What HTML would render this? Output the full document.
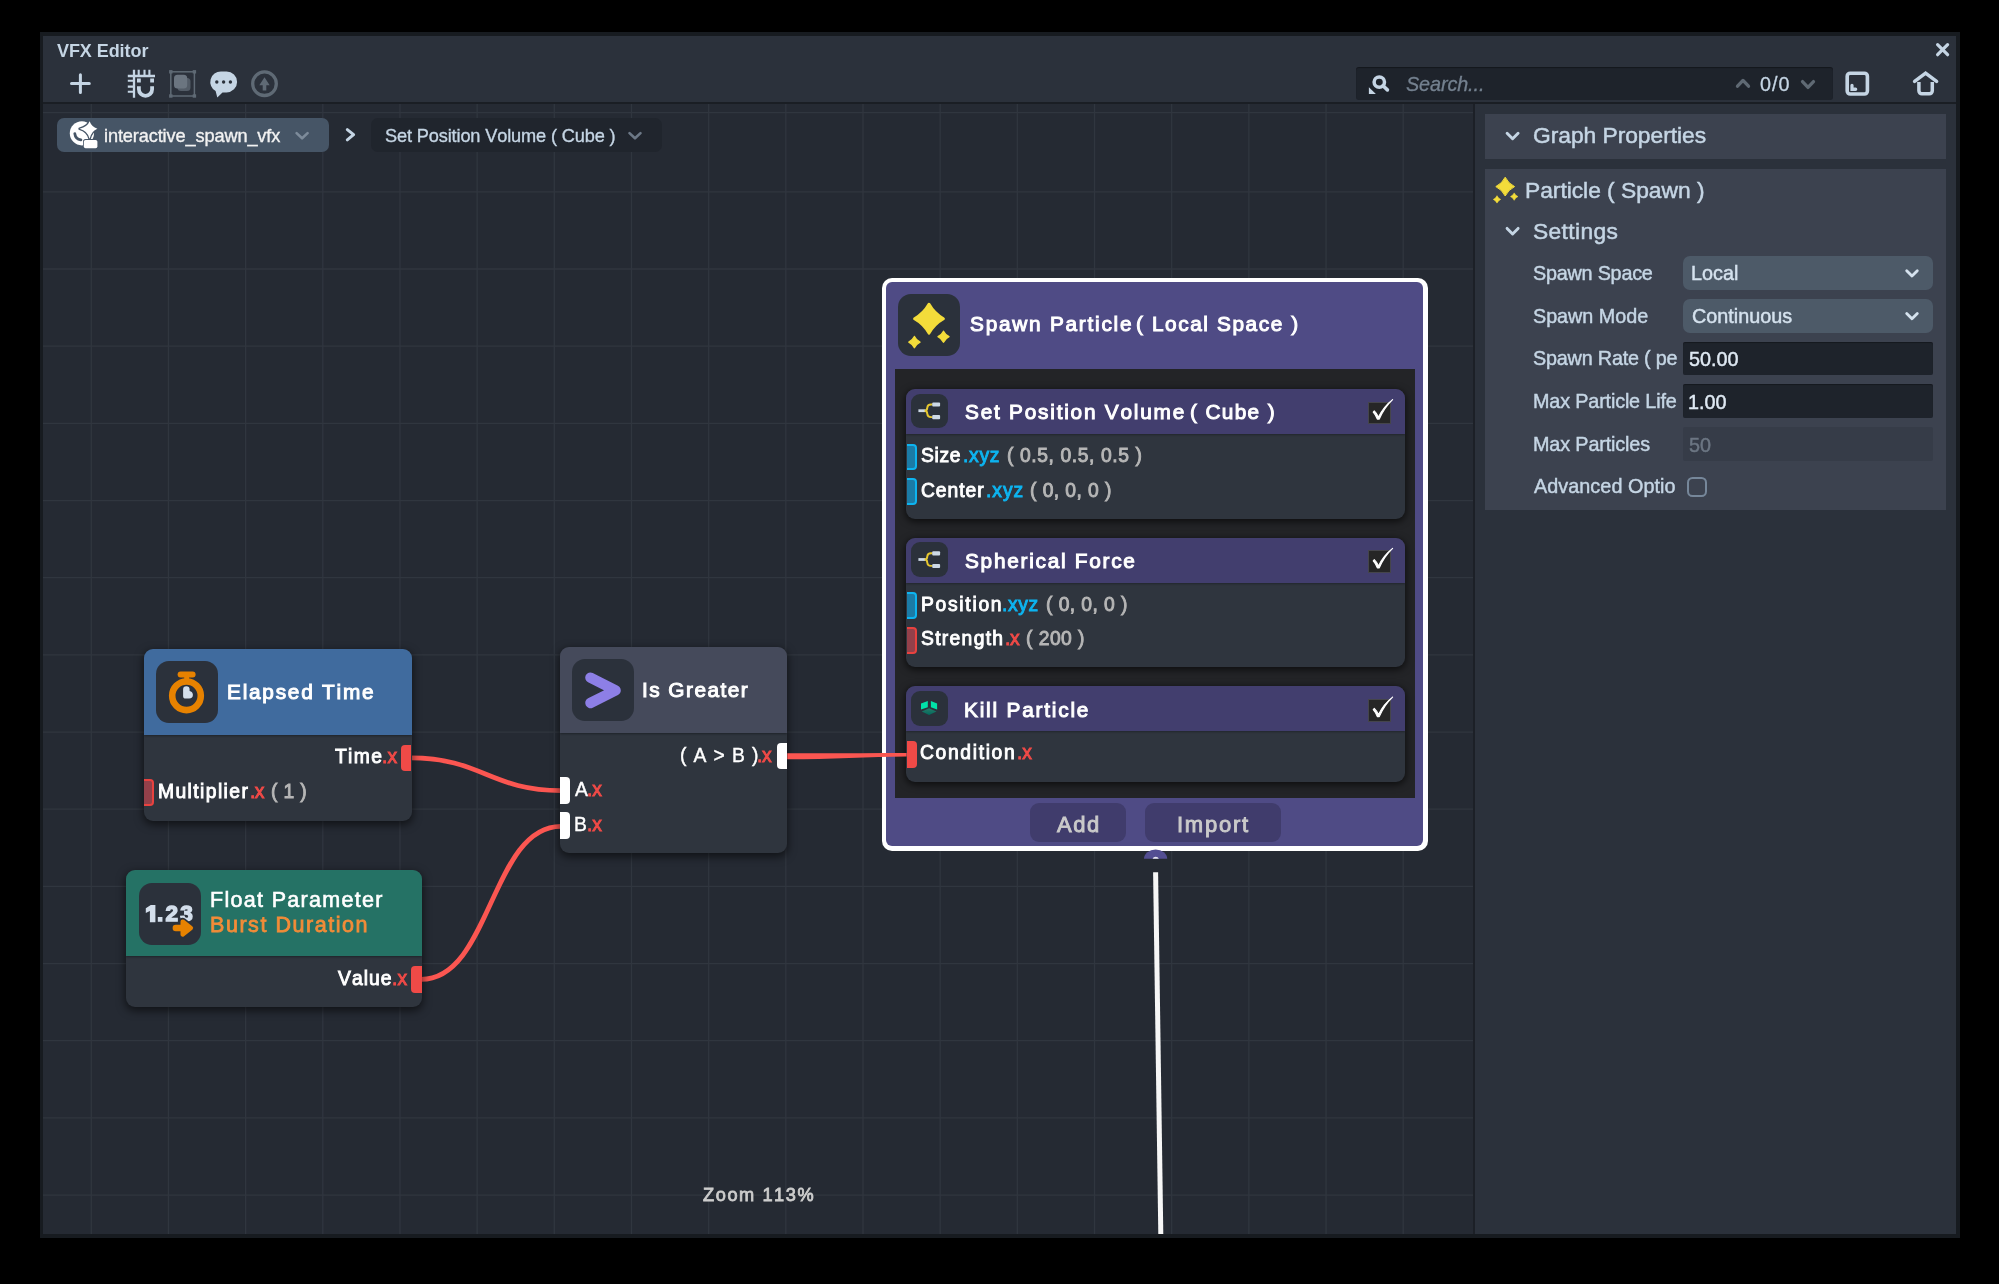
<!DOCTYPE html>
<html><head><meta charset="utf-8"><title>VFX Editor</title>
<style>
html,body{margin:0;padding:0;background:#000;}
body{width:1999px;height:1284px;position:relative;overflow:hidden;font-family:"Liberation Sans",sans-serif;font-kerning:none;}
.a{position:absolute;display:block;}
.t{white-space:pre;will-change:transform;}
.sh{box-shadow:0 3px 9px 1px rgba(0,0,0,.55);}
</style></head><body>
<div class="a " style="left:39.50px;top:32.00px;width:1920.50px;height:1205.50px;background:#171b20;"></div>
<div class="a " style="left:43.00px;top:36.00px;width:1913.00px;height:66.00px;background:#2b313b;"></div>
<div class="a " style="left:43.00px;top:102.00px;width:1913.00px;height:2.00px;background:#1a1e24;"></div>
<div class="a " style="left:43.00px;top:104.00px;width:1430.00px;height:1130.00px;background:#252a33;"></div>
<div class="a " style="left:1473.00px;top:104.00px;width:2.00px;height:1130.00px;background:#1c2027;"></div>
<div class="a " style="left:1475.00px;top:104.00px;width:481.00px;height:1130.00px;background:#2b313b;"></div>
<svg class="a" style="left:0;top:0;" width="1999" height="1284" viewBox="0 0 1999 1284"><g stroke="#30363f" stroke-width="1.3"><line x1="91.30" y1="104" x2="91.30" y2="1234"/><line x1="168.47" y1="104" x2="168.47" y2="1234"/><line x1="245.64" y1="104" x2="245.64" y2="1234"/><line x1="322.81" y1="104" x2="322.81" y2="1234"/><line x1="399.98" y1="104" x2="399.98" y2="1234"/><line x1="477.15" y1="104" x2="477.15" y2="1234"/><line x1="554.32" y1="104" x2="554.32" y2="1234"/><line x1="631.49" y1="104" x2="631.49" y2="1234"/><line x1="708.66" y1="104" x2="708.66" y2="1234"/><line x1="785.83" y1="104" x2="785.83" y2="1234"/><line x1="863.00" y1="104" x2="863.00" y2="1234"/><line x1="940.17" y1="104" x2="940.17" y2="1234"/><line x1="1017.34" y1="104" x2="1017.34" y2="1234"/><line x1="1094.51" y1="104" x2="1094.51" y2="1234"/><line x1="1171.68" y1="104" x2="1171.68" y2="1234"/><line x1="1248.85" y1="104" x2="1248.85" y2="1234"/><line x1="1326.02" y1="104" x2="1326.02" y2="1234"/><line x1="1403.19" y1="104" x2="1403.19" y2="1234"/><line x1="43" y1="112.70" x2="1473" y2="112.70"/><line x1="43" y1="191.85" x2="1473" y2="191.85"/><line x1="43" y1="269.02" x2="1473" y2="269.02"/><line x1="43" y1="346.19" x2="1473" y2="346.19"/><line x1="43" y1="423.36" x2="1473" y2="423.36"/><line x1="43" y1="500.53" x2="1473" y2="500.53"/><line x1="43" y1="577.70" x2="1473" y2="577.70"/><line x1="43" y1="654.87" x2="1473" y2="654.87"/><line x1="43" y1="732.04" x2="1473" y2="732.04"/><line x1="43" y1="809.21" x2="1473" y2="809.21"/><line x1="43" y1="886.38" x2="1473" y2="886.38"/><line x1="43" y1="963.55" x2="1473" y2="963.55"/><line x1="43" y1="1040.72" x2="1473" y2="1040.72"/><line x1="43" y1="1117.89" x2="1473" y2="1117.89"/><line x1="43" y1="1195.06" x2="1473" y2="1195.06"/></g></svg>
<div class="a t" style="left:56.68px;top:41.70px;font-size:18px;line-height:18px;letter-spacing:-0.069px;font-weight:bold;"><span style="color:#c5d5e4;">VFX Editor</span></div>
<svg class="a" style="left:0;top:0;" width="1999" height="1284" viewBox="0 0 1999 1284"><path d="M71.5 83.6H89.3M80.4 74.8V92.4" stroke="#c5d5e4" stroke-width="3" stroke-linecap="round" fill="none"/><g stroke="#c5d5e4" fill="none"><path d="M134 69.8V97.7M127.8 76H155" stroke-width="2.3"/><path d="M138.7 69.8V75M144.5 69.8V75M149.4 69.8V75M127.8 80.7H133M127.8 86.6H133M127.8 91.8H133" stroke-width="2.1"/><path d="M138.9 86.2V89.2A6.6 6.6 0 0 0 152.1 89.2V86.2" stroke-width="3.8"/><path d="M138.9 78.6V82.6M152.1 78.6V82.6" stroke-width="3.8"/></g><g fill="#5f6a75"><rect x="169.1" y="70.1" width="3.4" height="3.4"/><rect x="192.7" y="70.1" width="3.4" height="3.4"/><rect x="169.1" y="94.3" width="3.4" height="3.4"/><rect x="192.7" y="94.3" width="3.4" height="3.4"/></g><rect x="170.8" y="71.8" width="23.6" height="24.2" fill="none" stroke="#5f6a75" stroke-width="1.5"/><rect x="177.5" y="78" width="13" height="13" rx="3.5" fill="#535c67"/><rect x="174" y="74.8" width="13.2" height="13.6" rx="3.5" fill="#6b7580"/><path d="M221 71.4H226.5A10.6 10.5 0 0 1 226.5 92.4H222.5L217.3 97.6L215.6 91A10.6 10.5 0 0 1 221 71.4Z" fill="#c5d5e4"/><g fill="#2b313b"><circle cx="216.8" cy="82" r="1.7"/><circle cx="223.6" cy="82" r="1.7"/><circle cx="230.4" cy="82" r="1.7"/></g><circle cx="264.5" cy="83.7" r="11.8" fill="none" stroke="#5f6a75" stroke-width="3.3"/><path d="M259.3 85.2L264.5 77.2L269.7 85.2H266.3V90.6H262.7V85.2Z" fill="#5f6a75"/></svg>
<div class="a " style="left:1356.00px;top:67.00px;width:477.00px;height:33.00px;background:#1e232b;border-radius:3px;box-shadow:inset 0 1px 1px rgba(0,0,0,.35);"></div>
<svg class="a" style="left:0;top:0;" width="1999" height="1284" viewBox="0 0 1999 1284"><circle cx="1379.3" cy="82.1" r="5.2" fill="none" stroke="#c5d5e4" stroke-width="3.5"/><path d="M1383 85.8L1387.4 89.9" stroke="#c5d5e4" stroke-width="3.6" stroke-linecap="round"/><path d="M1368.9 87.2V94.1H1375.9Z" fill="#c5d5e4"/><path d="M1737.5 86.2L1743 80.4L1748.5 86.2" fill="none" stroke="#5f6973" stroke-width="3.3" stroke-linecap="round" stroke-linejoin="round"/><path d="M1802.5 81.6L1808 87.4L1813.5 81.6" fill="none" stroke="#5f6973" stroke-width="3.3" stroke-linecap="round" stroke-linejoin="round"/><rect x="1847.2" y="73.2" width="20.2" height="20.8" rx="3" fill="none" stroke="#c5d5e4" stroke-width="3.6"/><path d="M1850.4 91V85.3A1.6 1.6 0 0 1 1853.6 85.3V87.6H1855.6A1.7 1.7 0 0 1 1855.6 91Z" fill="#c5d5e4"/><path d="M1914.6 81.4L1925.6 73.2L1936.6 81.4" fill="none" stroke="#c5d5e4" stroke-width="3.5" stroke-linecap="round" stroke-linejoin="miter"/><path d="M1918.9 82V90.8A3 3 0 0 0 1921.9 93.8H1929.3A3 3 0 0 0 1932.3 90.8V82" fill="none" stroke="#c5d5e4" stroke-width="3.5"/><path d="M1937.6 44.7L1947.6 54.7M1947.6 44.7L1937.6 54.7" stroke="#c5d5e4" stroke-width="3.2" stroke-linecap="round"/></svg>
<div class="a t" style="left:1406.39px;top:74.95px;font-size:19.8px;line-height:19.8px;letter-spacing:-0.094px;font-style:italic;"><span style="color:#74818f;-webkit-text-stroke:0.3px #74818f;">Search...</span></div>
<div class="a t" style="left:1759.98px;top:74.75px;font-size:19.8px;line-height:19.8px;letter-spacing:1.062px;"><span style="color:#c5d5e4;-webkit-text-stroke:0.3px #c5d5e4;">0/0</span></div>
<div class="a " style="left:56.60px;top:118.00px;width:272.70px;height:33.80px;background:#465566;border-radius:7px;"></div>
<div class="a " style="left:370.50px;top:118.00px;width:291.00px;height:33.80px;background:#20252d;border-radius:7px;"></div>
<svg class="a" style="left:0;top:0;" width="1999" height="1284" viewBox="0 0 1999 1284"><circle cx="81.9" cy="133.3" r="12.1" fill="#fff"/><path d="M74.8 133.6A7.2 7.2 0 0 0 80.9 139.9" fill="none" stroke="#465566" stroke-width="2.8" stroke-linecap="round"/><path d="M89.6 121.3Q91.6 126.8 97.4 128.8Q91.6 130.8 89.6 138.8Q87.6 130.8 79.6 128.8Q87.6 126.8 89.6 121.3Z" fill="#fff" stroke="#465566" stroke-width="2.6" paint-order="stroke" stroke-linejoin="round"/><rect x="83.8" y="139.9" width="13.6" height="8.4" rx="1.8" fill="#fff" stroke="#465566" stroke-width="1.6" paint-order="stroke"/><path d="M296.6 133.1L302.1 138.3L307.6 133.1" fill="none" stroke="#7d8b9a" stroke-width="2.6" stroke-linecap="round" stroke-linejoin="round"/><path d="M347.3 129.6L353.6 134.7L347.3 139.8" fill="none" stroke="#c5d5e4" stroke-width="3" stroke-linecap="round" stroke-linejoin="round"/><path d="M629.5 133.1L635 138.3L640.5 133.1" fill="none" stroke="#6c7886" stroke-width="2.6" stroke-linecap="round" stroke-linejoin="round"/></svg>
<div class="a t" style="left:104.16px;top:127.03px;font-size:18.2px;line-height:18.2px;letter-spacing:-0.129px;"><span style="color:#f2f2f2;-webkit-text-stroke:0.35px #f2f2f2;">interactive_spawn_vfx</span></div>
<div class="a t" style="left:384.65px;top:127.03px;font-size:18.2px;line-height:18.2px;letter-spacing:-0.143px;"><span style="color:#c5d5e4;-webkit-text-stroke:0.35px #c5d5e4;">Set Position Volume ( Cube )</span></div>
<svg class="a" style="left:0;top:0;" width="1999" height="1284" viewBox="0 0 1999 1284"><path d="M411 757.9C481 757.9 491 790.6 561 790.6" fill="none" stroke="#fb5651" stroke-width="4.8"/><path d="M421 979.4C491 979.4 491 826.3 561 826.3" fill="none" stroke="#fb5651" stroke-width="4.8"/><path d="M1155.6 872.2L1160.8 1234" fill="none" stroke="#f6f6f6" stroke-width="5"/></svg>
<div class="a sh" style="left:143.7px;top:648.7px;width:267.90000000000003px;height:172.0px;border-radius:9px;background:#2f353e;overflow:hidden;"><div class="a" style="left:0;top:0;width:100%;height:86.0px;background:#406b9e;box-shadow:0 1px 2px rgba(0,0,0,.35);"></div></div>
<div class="a " style="left:155.70px;top:661.30px;width:62.00px;height:62.00px;background:#2b313b;border-radius:13px;"></div>
<svg class="a" style="left:0;top:0;" width="1999" height="1284" viewBox="0 0 1999 1284"><circle cx="186.5" cy="695.8" r="14.3" fill="none" stroke="#e78200" stroke-width="6.6"/><path d="M180.6 674.4H192.6" stroke="#e78200" stroke-width="6" stroke-linecap="round"/><rect x="184.2" y="675" width="4.9" height="7" fill="#e78200"/><path d="M183.1 689.4a3.25 3.25 0 0 1 6.5 0v1.5c2 .4 3.3 1.9 3.3 3.9a3.8 3.8 0 0 1-3.8 3.8h-3.4a2.6 2.6 0 0 1-2.6-2.6z" fill="#d3deeb"/></svg>
<div class="a t" style="left:226.89px;top:681.50px;font-size:20.8px;line-height:20.8px;letter-spacing:1.762px;"><span style="color:#fff;-webkit-text-stroke:1.0px #fff;">Elapsed Time</span></div>
<div class="a t" style="left:334.72px;top:747.20px;font-size:19.3px;line-height:19.3px;letter-spacing:1.335px;"><span style="color:#fff;-webkit-text-stroke:0.9px #fff;">Time</span></div>
<div class="a t" style="left:381.69px;top:747.20px;font-size:19.3px;line-height:19.3px;letter-spacing:0.054px;"><span style="color:#f04a47;-webkit-text-stroke:0.9px #f04a47;">.x</span></div>
<div class="a " style="left:401.00px;top:744.90px;width:10.30px;height:26.60px;background:#f04a47;border-radius:4px 0 0 4px;"></div>
<div class="a " style="left:143.70px;top:779.30px;width:10.00px;height:26.80px;background:#93404a;border-radius:0 4px 4px 0;box-sizing:border-box;border:2px solid #e8423f;border-left:none;"></div>
<div class="a t" style="left:157.77px;top:781.80px;font-size:19.3px;line-height:19.3px;letter-spacing:1.412px;"><span style="color:#fff;-webkit-text-stroke:0.9px #fff;">Multiplier</span></div>
<div class="a t" style="left:249.99px;top:781.80px;font-size:19.3px;line-height:19.3px;letter-spacing:-0.646px;"><span style="color:#f04a47;-webkit-text-stroke:0.9px #f04a47;">.x</span></div>
<div class="a t" style="left:270.95px;top:781.80px;font-size:19.3px;line-height:19.3px;letter-spacing:0.370px;"><span style="color:#b6b6b6;-webkit-text-stroke:0.9px #b6b6b6;">( 1 )</span></div>
<div class="a sh" style="left:126px;top:870.4px;width:296px;height:136.5px;border-radius:9px;background:#2f353e;overflow:hidden;"><div class="a" style="left:0;top:0;width:100%;height:85.60000000000002px;background:#257265;box-shadow:0 1px 2px rgba(0,0,0,.35);"></div></div>
<div class="a " style="left:138.90px;top:883.10px;width:62.00px;height:62.00px;background:#2b313b;border-radius:13px;"></div>
<div class="a t" style="left:157.37px;top:903.30px;font-size:22.6px;line-height:22.6px;letter-spacing:2.218px;font-weight:bold;"><span style="color:#d3deeb;-webkit-text-stroke:1.4px #d3deeb;">.23</span></div>
<svg class="a" style="left:0;top:0;" width="1999" height="1284" viewBox="0 0 1999 1284"><path d="M150.8 904.9H155.4V922.3H149.9V910.9L145.8 913V908.2Z" fill="#d3deeb"/></svg>
<svg class="a" style="left:0;top:0;" width="1999" height="1284" viewBox="0 0 1999 1284"><path d="M175.8 928H184" stroke="#2b313b" stroke-width="9.6" stroke-linecap="round"/><path d="M182.7 921.6L190.9 928L182.7 934.4Z" fill="#2b313b" stroke="#2b313b" stroke-width="7.6" stroke-linejoin="round"/><path d="M175.8 928H184" stroke="#e78200" stroke-width="6.4" stroke-linecap="round"/><path d="M182.7 921.6L190.9 928L182.7 934.4Z" fill="#e78200" stroke="#e78200" stroke-width="4.4" stroke-linejoin="round"/></svg>
<div class="a t" style="left:209.54px;top:889.95px;font-size:21.5px;line-height:21.5px;letter-spacing:1.313px;"><span style="color:#fff;-webkit-text-stroke:0.6px #fff;">Float Parameter</span></div>
<div class="a t" style="left:209.64px;top:914.65px;font-size:21.5px;line-height:21.5px;letter-spacing:1.550px;"><span style="color:#f28c38;-webkit-text-stroke:0.8px #f28c38;">Burst Duration</span></div>
<div class="a t" style="left:338.07px;top:968.80px;font-size:19.3px;line-height:19.3px;letter-spacing:1.023px;"><span style="color:#fff;-webkit-text-stroke:0.9px #fff;">Value</span></div>
<div class="a t" style="left:391.59px;top:968.80px;font-size:19.3px;line-height:19.3px;letter-spacing:0.154px;"><span style="color:#f04a47;-webkit-text-stroke:0.9px #f04a47;">.x</span></div>
<div class="a " style="left:411.30px;top:966.10px;width:10.30px;height:26.60px;background:#f04a47;border-radius:4px 0 0 4px;"></div>
<div class="a sh" style="left:559.9px;top:646.7px;width:227.0px;height:206.69999999999993px;border-radius:9px;background:#2f353e;overflow:hidden;"><div class="a" style="left:0;top:0;width:100%;height:86.09999999999991px;background:#454a5b;box-shadow:0 1px 2px rgba(0,0,0,.35);"></div></div>
<div class="a " style="left:571.90px;top:659.10px;width:62.00px;height:62.00px;background:#2b313b;border-radius:13px;"></div>
<svg class="a" style="left:0;top:0;" width="1999" height="1284" viewBox="0 0 1999 1284"><path d="M590.4 677.6L615.6 690.3L590.4 703" fill="none" stroke="#8d7fe6" stroke-width="10.4" stroke-linecap="round" stroke-linejoin="round"/></svg>
<div class="a t" style="left:642.18px;top:679.60px;font-size:20.8px;line-height:20.8px;letter-spacing:1.465px;"><span style="color:#fff;-webkit-text-stroke:1.0px #fff;">Is Greater</span></div>
<div class="a t" style="left:679.60px;top:745.85px;font-size:19.3px;line-height:19.3px;letter-spacing:0.883px;"><span style="color:#fff;-webkit-text-stroke:0.4px #fff;">( A &gt; B )</span></div>
<div class="a t" style="left:757.49px;top:745.60px;font-size:19.3px;line-height:19.3px;letter-spacing:-0.446px;"><span style="color:#f04a47;-webkit-text-stroke:0.9px #f04a47;">.x</span></div>
<div class="a " style="left:776.60px;top:742.70px;width:10.30px;height:26.60px;background:#fff;border-radius:4px 0 0 4px;"></div>
<div class="a " style="left:559.90px;top:777.30px;width:10.00px;height:26.80px;background:#fff;border-radius:0 4px 4px 0;"></div>
<div class="a " style="left:559.90px;top:812.20px;width:10.00px;height:26.80px;background:#fff;border-radius:0 4px 4px 0;"></div>
<div class="a t" style="left:574.56px;top:780.45px;font-size:19.3px;line-height:19.3px;letter-spacing:-0.198px;"><span style="color:#fff;-webkit-text-stroke:0.4px #fff;">A</span></div>
<div class="a t" style="left:587.49px;top:780.20px;font-size:19.3px;line-height:19.3px;letter-spacing:-0.146px;"><span style="color:#f04a47;-webkit-text-stroke:0.9px #f04a47;">.x</span></div>
<div class="a t" style="left:574.22px;top:815.15px;font-size:19.3px;line-height:19.3px;letter-spacing:0.728px;"><span style="color:#fff;-webkit-text-stroke:0.4px #fff;">B</span></div>
<div class="a t" style="left:587.49px;top:814.90px;font-size:19.3px;line-height:19.3px;letter-spacing:-0.146px;"><span style="color:#f04a47;-webkit-text-stroke:0.9px #f04a47;">.x</span></div>
<div class="a" style="left:881.7px;top:277.5px;width:545.9px;height:573.4px;border-radius:10px;background:#fff;"></div>
<div class="a " style="left:886.40px;top:282.20px;width:536.60px;height:564.00px;background:#4f4b85;border-radius:6px;"></div>
<div class="a " style="left:894.60px;top:369.00px;width:520.50px;height:428.60px;background:#232427;"></div>
<div class="a " style="left:898.00px;top:293.60px;width:62.00px;height:62.00px;background:#2b313b;border-radius:13px;"></div>
<svg class="a" style="left:0;top:0;" width="1999" height="1284" viewBox="0 0 1999 1284"><path d="M929 304.3Q934.184 313.51599999999996 943.4 318.7Q934.184 323.884 929 333.09999999999997Q923.816 323.884 914.6 318.7Q923.816 313.51599999999996 929 304.3Z" fill="#f3dc3a" stroke="#f3dc3a" stroke-width="3" stroke-linejoin="round"/><path d="M943.5 331.2Q945.315 334.885 949.0 336.7Q945.315 338.515 943.5 342.2Q941.685 338.515 938.0 336.7Q941.685 334.885 943.5 331.2Z" fill="#f3dc3a" stroke="#f3dc3a" stroke-width="1.4" stroke-linejoin="round"/><path d="M914.4 336.5Q916.2479999999999 340.252 920.0 342.1Q916.2479999999999 343.94800000000004 914.4 347.70000000000005Q912.552 343.94800000000004 908.8 342.1Q912.552 340.252 914.4 336.5Z" fill="#f3dc3a" stroke="#f3dc3a" stroke-width="1.4" stroke-linejoin="round"/></svg>
<div class="a t" style="left:969.76px;top:313.80px;font-size:20.8px;line-height:20.8px;letter-spacing:1.758px;"><span style="color:#fff;-webkit-text-stroke:1.0px #fff;">Spawn Particle</span></div>
<div class="a t" style="left:1135.81px;top:313.80px;font-size:20.8px;line-height:20.8px;letter-spacing:1.593px;"><span style="color:#fff;-webkit-text-stroke:1.0px #fff;">( Local Space )</span></div>
<div class="a" style="left:906.4px;top:388.8px;width:498.80000000000007px;height:130.09999999999997px;border-radius:9px;background:#2f353e;overflow:hidden;box-shadow:0 2px 7px 1px rgba(0,0,0,.6);"><div class="a" style="left:0;top:0;width:100%;height:45.39999999999998px;background:#423e6e;box-shadow:0 1px 2px rgba(0,0,0,.3);"></div></div>
<div class="a " style="left:911.00px;top:393.50px;width:36.70px;height:34.60px;background:#2b313b;border-radius:9px;"></div>
<div class="a " style="left:1368.00px;top:401.50px;width:22.70px;height:22.80px;background:#262626;box-sizing:border-box;border:1.5px solid #45454b;"></div>
<svg class="a" style="left:0;top:0;" width="1999" height="1284" viewBox="0 0 1999 1284"><path d="M1374.3 410.9Q1377 413.5 1378.5 417.1Q1383.5 406.5 1392.6 399.6Q1384 408.0 1379.3 419.1H1377.3Q1375.5 414.5 1373.2 412.1Z" fill="#fff" stroke="#fff" stroke-width="1.1" stroke-linejoin="round"/></svg>
<div class="a t" style="left:964.86px;top:402.10px;font-size:20.8px;line-height:20.8px;letter-spacing:1.777px;"><span style="color:#fff;-webkit-text-stroke:1.0px #fff;">Set Position Volume</span></div>
<div class="a t" style="left:1190.01px;top:402.10px;font-size:20.8px;line-height:20.8px;letter-spacing:1.350px;"><span style="color:#fff;-webkit-text-stroke:1.0px #fff;">( Cube )</span></div>
<svg class="a" style="left:0;top:0;" width="1999" height="1284" viewBox="0 0 1999 1284"><path d="M918.4 410.7H925.5" stroke="#cdd9e6" stroke-width="2.8"/><path d="M932.5 404.5H931Q927.5 404.5 927.3 407.6Q927.2 410.7 924.6 410.7Q927.2 410.7 927.3 413.9Q927.5 417.1 931 417.1H932.5" fill="none" stroke="#e6c72f" stroke-width="1.9"/><rect x="932.2" y="402.4" width="7.9" height="4.2" rx="1" fill="#cdd9e6"/><rect x="932.2" y="415.1" width="7.9" height="4.2" rx="1" fill="#cdd9e6"/></svg>
<div class="a " style="left:906.70px;top:443.65px;width:10.10px;height:26.80px;background:#1b7ba6;border-radius:0 4px 4px 0;box-sizing:border-box;border:2px solid #0db4f0;border-left:none;"></div>
<div class="a t" style="left:920.87px;top:446.30px;font-size:19.3px;line-height:19.3px;letter-spacing:0.665px;"><span style="color:#fff;-webkit-text-stroke:0.9px #fff;">Size</span></div>
<div class="a t" style="left:963.09px;top:446.30px;font-size:19.3px;line-height:19.3px;letter-spacing:0.703px;"><span style="color:#0db4f0;-webkit-text-stroke:0.9px #0db4f0;">.xyz</span></div>
<div class="a t" style="left:1007.05px;top:446.30px;font-size:19.3px;line-height:19.3px;letter-spacing:0.592px;"><span style="color:#b6b6b6;-webkit-text-stroke:0.9px #b6b6b6;">( 0.5, 0.5, 0.5 )</span></div>
<div class="a " style="left:906.70px;top:478.10px;width:10.10px;height:26.80px;background:#1b7ba6;border-radius:0 4px 4px 0;box-sizing:border-box;border:2px solid #0db4f0;border-left:none;"></div>
<div class="a t" style="left:920.77px;top:480.50px;font-size:19.3px;line-height:19.3px;letter-spacing:0.936px;"><span style="color:#fff;-webkit-text-stroke:0.9px #fff;">Center</span></div>
<div class="a t" style="left:985.59px;top:480.50px;font-size:19.3px;line-height:19.3px;letter-spacing:0.969px;"><span style="color:#0db4f0;-webkit-text-stroke:0.9px #0db4f0;">.xyz</span></div>
<div class="a t" style="left:1029.85px;top:480.50px;font-size:19.3px;line-height:19.3px;letter-spacing:0.426px;"><span style="color:#b6b6b6;-webkit-text-stroke:0.9px #b6b6b6;">( 0, 0, 0 )</span></div>
<div class="a" style="left:906.4px;top:537.6px;width:498.80000000000007px;height:129.79999999999995px;border-radius:9px;background:#2f353e;overflow:hidden;box-shadow:0 2px 7px 1px rgba(0,0,0,.6);"><div class="a" style="left:0;top:0;width:100%;height:45.19999999999993px;background:#423e6e;box-shadow:0 1px 2px rgba(0,0,0,.3);"></div></div>
<div class="a " style="left:911.00px;top:542.30px;width:36.70px;height:34.60px;background:#2b313b;border-radius:9px;"></div>
<div class="a " style="left:1368.00px;top:550.30px;width:22.70px;height:22.80px;background:#262626;box-sizing:border-box;border:1.5px solid #45454b;"></div>
<svg class="a" style="left:0;top:0;" width="1999" height="1284" viewBox="0 0 1999 1284"><path d="M1374.3 559.7Q1377 562.3000000000001 1378.5 565.9000000000001Q1383.5 555.3000000000001 1392.6 548.4000000000001Q1384 556.8000000000001 1379.3 567.9000000000001H1377.3Q1375.5 563.3000000000001 1373.2 560.9000000000001Z" fill="#fff" stroke="#fff" stroke-width="1.1" stroke-linejoin="round"/></svg>
<div class="a t" style="left:964.86px;top:550.90px;font-size:20.8px;line-height:20.8px;letter-spacing:1.731px;"><span style="color:#fff;-webkit-text-stroke:1.0px #fff;">Spherical Force</span></div>
<svg class="a" style="left:0;top:0;" width="1999" height="1284" viewBox="0 0 1999 1284"><path d="M918.4 559.5H925.5" stroke="#cdd9e6" stroke-width="2.8"/><path d="M932.5 553.3H931Q927.5 553.3 927.3 556.4000000000001Q927.2 559.5 924.6 559.5Q927.2 559.5 927.3 562.7Q927.5 565.9000000000001 931 565.9000000000001H932.5" fill="none" stroke="#e6c72f" stroke-width="1.9"/><rect x="932.2" y="551.2" width="7.9" height="4.2" rx="1" fill="#cdd9e6"/><rect x="932.2" y="563.9000000000001" width="7.9" height="4.2" rx="1" fill="#cdd9e6"/></svg>
<div class="a " style="left:906.70px;top:592.10px;width:10.10px;height:26.80px;background:#1b7ba6;border-radius:0 4px 4px 0;box-sizing:border-box;border:2px solid #0db4f0;border-left:none;"></div>
<div class="a t" style="left:920.77px;top:594.80px;font-size:19.3px;line-height:19.3px;letter-spacing:1.712px;"><span style="color:#fff;-webkit-text-stroke:0.9px #fff;">Position</span></div>
<div class="a t" style="left:1001.79px;top:594.80px;font-size:19.3px;line-height:19.3px;letter-spacing:0.636px;"><span style="color:#0db4f0;-webkit-text-stroke:0.9px #0db4f0;">.xyz</span></div>
<div class="a t" style="left:1045.55px;top:594.80px;font-size:19.3px;line-height:19.3px;letter-spacing:0.426px;"><span style="color:#b6b6b6;-webkit-text-stroke:0.9px #b6b6b6;">( 0, 0, 0 )</span></div>
<div class="a " style="left:906.70px;top:626.80px;width:10.10px;height:26.80px;background:#93404a;border-radius:0 4px 4px 0;box-sizing:border-box;border:2px solid #e8423f;border-left:none;"></div>
<div class="a t" style="left:921.47px;top:628.80px;font-size:19.3px;line-height:19.3px;letter-spacing:1.311px;"><span style="color:#fff;-webkit-text-stroke:0.9px #fff;">Strength</span></div>
<div class="a t" style="left:1005.19px;top:628.80px;font-size:19.3px;line-height:19.3px;letter-spacing:-0.446px;"><span style="color:#f04a47;-webkit-text-stroke:0.9px #f04a47;">.x</span></div>
<div class="a t" style="left:1026.15px;top:628.80px;font-size:19.3px;line-height:19.3px;letter-spacing:0.469px;"><span style="color:#b6b6b6;-webkit-text-stroke:0.9px #b6b6b6;">( 200 )</span></div>
<div class="a" style="left:906.4px;top:686.3px;width:498.80000000000007px;height:95.5px;border-radius:9px;background:#2f353e;overflow:hidden;box-shadow:0 2px 7px 1px rgba(0,0,0,.6);"><div class="a" style="left:0;top:0;width:100%;height:44.80000000000007px;background:#423e6e;box-shadow:0 1px 2px rgba(0,0,0,.3);"></div></div>
<div class="a " style="left:911.00px;top:691.00px;width:36.70px;height:34.60px;background:#2b313b;border-radius:9px;"></div>
<div class="a " style="left:1368.00px;top:699.00px;width:22.70px;height:22.80px;background:#262626;box-sizing:border-box;border:1.5px solid #45454b;"></div>
<svg class="a" style="left:0;top:0;" width="1999" height="1284" viewBox="0 0 1999 1284"><path d="M1374.3 708.4Q1377 711.0 1378.5 714.6Q1383.5 704.0 1392.6 697.1Q1384 705.5 1379.3 716.6H1377.3Q1375.5 712.0 1373.2 709.6Z" fill="#fff" stroke="#fff" stroke-width="1.1" stroke-linejoin="round"/></svg>
<div class="a t" style="left:964.09px;top:699.60px;font-size:20.8px;line-height:20.8px;letter-spacing:1.798px;"><span style="color:#fff;-webkit-text-stroke:1.0px #fff;">Kill Particle</span></div>
<svg class="a" style="left:0;top:0;" width="1999" height="1284" viewBox="0 0 1999 1284"><defs><linearGradient id="kg" x1="0" y1="0" x2="0" y2="1"><stop offset="0" stop-color="#2a7a68"/><stop offset="1" stop-color="#006a5c"/></linearGradient></defs><path d="M921 703.5L927.8 701.0V707.2L921 709.6Z" fill="#00e2a9"/><path d="M930.9 701.0L937.1 703.5V709.6L930.9 707.2Z" fill="#00e2a9"/><path d="M921.7 711.5L929.1 708.2L936.5 711.5L929.1 715.0Z" fill="url(#kg)"/></svg>
<div class="a " style="left:906.70px;top:740.80px;width:10.10px;height:26.80px;background:#f04a47;border-radius:0 4px 4px 0;"></div>
<div class="a t" style="left:920.47px;top:743.40px;font-size:19.3px;line-height:19.3px;letter-spacing:1.651px;"><span style="color:#fff;-webkit-text-stroke:0.9px #fff;">Condition</span></div>
<div class="a t" style="left:1016.79px;top:743.40px;font-size:19.3px;line-height:19.3px;letter-spacing:-0.146px;"><span style="color:#f04a47;-webkit-text-stroke:0.9px #f04a47;">.x</span></div>
<div class="a " style="left:1029.80px;top:803.20px;width:96.30px;height:38.60px;background:#403c6c;border-radius:9px;"></div>
<div class="a " style="left:1145.00px;top:803.20px;width:135.50px;height:38.60px;background:#403c6c;border-radius:9px;"></div>
<div class="a t" style="left:1057.01px;top:813.85px;font-size:22px;line-height:22px;letter-spacing:1.511px;"><span style="color:#cacaca;-webkit-text-stroke:0.9px #cacaca;">Add</span></div>
<div class="a t" style="left:1176.82px;top:813.85px;font-size:22px;line-height:22px;letter-spacing:1.749px;"><span style="color:#cacaca;-webkit-text-stroke:0.9px #cacaca;">Import</span></div>
<svg class="a" style="left:0;top:0;" width="1999" height="1284" viewBox="0 0 1999 1284"><path d="M1144 858.8A11.6 9.4 0 0 1 1167.2 858.8Z" fill="#534e92"/><path d="M1152.6 858.8A3.2 2.6 0 0 1 1158.8 858.8Z" fill="#e4e4ee"/></svg>
<svg class="a" style="left:0;top:0;" width="1999" height="1284" viewBox="0 0 1999 1284"><path d="M787.3 753.2C830 753.4 870 753 906.6 752.9V756.4C870 756.8 830 759.2 787.3 759.3Z" fill="#fb5651"/></svg>
<div class="a t" style="left:703.42px;top:1186.10px;font-size:18.2px;line-height:18.2px;letter-spacing:1.576px;"><span style="color:#cdcdcd;-webkit-text-stroke:0.8px #cdcdcd;">Zoom 113%</span></div>
<div class="a " style="left:1485.30px;top:114.00px;width:460.70px;height:44.90px;background:#3c424f;"></div>
<div class="a " style="left:1485.30px;top:168.50px;width:460.70px;height:341.70px;background:#3c424f;"></div>
<svg class="a" style="left:0;top:0;" width="1999" height="1284" viewBox="0 0 1999 1284"><path d="M1507.1 133.2L1512.6 138.8L1518.1 133.2" fill="none" stroke="#c5d5e4" stroke-width="2.9" stroke-linecap="round" stroke-linejoin="round"/><path d="M1507.1 228.39999999999998L1512.6 234.0L1518.1 228.39999999999998" fill="none" stroke="#c5d5e4" stroke-width="2.9" stroke-linecap="round" stroke-linejoin="round"/><path d="M1505.2 177.2Q1508.3020000000001 183.498 1514.6000000000001 186.6Q1508.3020000000001 189.702 1505.2 196.0Q1502.098 189.702 1495.8 186.6Q1502.098 183.498 1505.2 177.2Z" fill="#f3dc3a" stroke="#f3dc3a" stroke-width="1" stroke-linejoin="round"/><path d="M1514.2 192.9Q1515.31 195.48999999999998 1517.9 196.6Q1515.31 197.71 1514.2 200.29999999999998Q1513.0900000000001 197.71 1510.5 196.6Q1513.0900000000001 195.48999999999998 1514.2 192.9Z" fill="#f3dc3a" stroke="#f3dc3a" stroke-width=".6"/><path d="M1497 195.70000000000002Q1498.11 198.29 1500.7 199.4Q1498.11 200.51000000000002 1497 203.1Q1495.89 200.51000000000002 1493.3 199.4Q1495.89 198.29 1497 195.70000000000002Z" fill="#f3dc3a" stroke="#f3dc3a" stroke-width=".6"/></svg>
<div class="a t" style="left:1532.70px;top:124.15px;font-size:22.8px;line-height:22.8px;letter-spacing:-0.035px;"><span style="color:#c5d5e4;-webkit-text-stroke:0.5px #c5d5e4;">Graph Properties</span></div>
<div class="a t" style="left:1525.28px;top:178.75px;font-size:22.8px;line-height:22.8px;letter-spacing:-0.025px;"><span style="color:#c5d5e4;-webkit-text-stroke:0.5px #c5d5e4;">Particle ( Spawn )</span></div>
<div class="a t" style="left:1532.81px;top:219.55px;font-size:22.8px;line-height:22.8px;letter-spacing:0.369px;"><span style="color:#c5d5e4;-webkit-text-stroke:0.5px #c5d5e4;">Settings</span></div>
<div class="a t" style="left:1532.93px;top:263.88px;font-size:19.8px;line-height:19.8px;letter-spacing:-0.224px;"><span style="color:#c5d5e4;-webkit-text-stroke:0.45px #c5d5e4;">Spawn Space</span></div>
<div class="a t" style="left:1532.93px;top:306.59px;font-size:19.8px;line-height:19.8px;letter-spacing:-0.036px;"><span style="color:#c5d5e4;-webkit-text-stroke:0.45px #c5d5e4;">Spawn Mode</span></div>
<div class="a t" style="left:1532.93px;top:349.31px;font-size:19.8px;line-height:19.8px;letter-spacing:-0.196px;"><span style="color:#c5d5e4;-webkit-text-stroke:0.45px #c5d5e4;">Spawn Rate ( pe</span></div>
<div class="a t" style="left:1533.30px;top:392.04px;font-size:19.8px;line-height:19.8px;letter-spacing:-0.155px;"><span style="color:#c5d5e4;-webkit-text-stroke:0.45px #c5d5e4;">Max Particle Life</span></div>
<div class="a t" style="left:1533.30px;top:434.75px;font-size:19.8px;line-height:19.8px;letter-spacing:-0.136px;"><span style="color:#c5d5e4;-webkit-text-stroke:0.45px #c5d5e4;">Max Particles</span></div>
<div class="a t" style="left:1533.79px;top:477.47px;font-size:19.8px;line-height:19.8px;letter-spacing:0.057px;"><span style="color:#c5d5e4;-webkit-text-stroke:0.45px #c5d5e4;">Advanced Optio</span></div>
<div class="a " style="left:1683.20px;top:256.20px;width:249.60px;height:33.80px;background:#4d5a68;border-radius:7px;"></div>
<div class="a t" style="left:1691.30px;top:264.07px;font-size:19.8px;line-height:19.8px;letter-spacing:0.000px;"><span style="color:#d5e2ee;-webkit-text-stroke:0.45px #d5e2ee;">Local</span></div>
<svg class="a" style="left:0;top:0;" width="1999" height="1284" viewBox="0 0 1999 1284"><path d="M1906.7 270.7L1912 276.09999999999997L1917.3 270.7" fill="none" stroke="#d5e2ee" stroke-width="2.8" stroke-linecap="round" stroke-linejoin="round"/></svg>
<div class="a " style="left:1683.20px;top:298.92px;width:249.60px;height:33.80px;background:#4d5a68;border-radius:7px;"></div>
<div class="a t" style="left:1691.92px;top:306.80px;font-size:19.8px;line-height:19.8px;letter-spacing:0.000px;"><span style="color:#d5e2ee;-webkit-text-stroke:0.45px #d5e2ee;">Continuous</span></div>
<svg class="a" style="left:0;top:0;" width="1999" height="1284" viewBox="0 0 1999 1284"><path d="M1906.7 313.41999999999996L1912 318.81999999999994L1917.3 313.41999999999996" fill="none" stroke="#d5e2ee" stroke-width="2.8" stroke-linecap="round" stroke-linejoin="round"/></svg>
<div class="a " style="left:1683.20px;top:341.70px;width:249.60px;height:33.60px;background:#1e232b;border-radius:2px;box-shadow:inset 0 1px 1px rgba(0,0,0,.3);"></div>
<div class="a t" style="left:1688.73px;top:350.31px;font-size:19.8px;line-height:19.8px;letter-spacing:0.000px;"><span style="color:#dfe9f3;-webkit-text-stroke:0.45px #dfe9f3;">50.00</span></div>
<div class="a " style="left:1683.20px;top:384.42px;width:249.60px;height:33.60px;background:#1e232b;border-radius:2px;box-shadow:inset 0 1px 1px rgba(0,0,0,.3);"></div>
<div class="a t" style="left:1688.02px;top:393.03px;font-size:19.8px;line-height:19.8px;letter-spacing:0.000px;"><span style="color:#dfe9f3;-webkit-text-stroke:0.45px #dfe9f3;">1.00</span></div>
<div class="a " style="left:1683.20px;top:427.14px;width:249.60px;height:33.60px;background:#363c48;border-radius:2px;"></div>
<div class="a t" style="left:1688.73px;top:435.75px;font-size:19.8px;line-height:19.8px;letter-spacing:0.000px;"><span style="color:#6c7683;-webkit-text-stroke:0.45px #6c7683;">50</span></div>
<div class="a " style="left:1687.00px;top:477.00px;width:19.80px;height:19.80px;background:transparent;border-radius:5.5px;box-sizing:border-box;border:2.6px solid #76879a;"></div>
</body></html>
